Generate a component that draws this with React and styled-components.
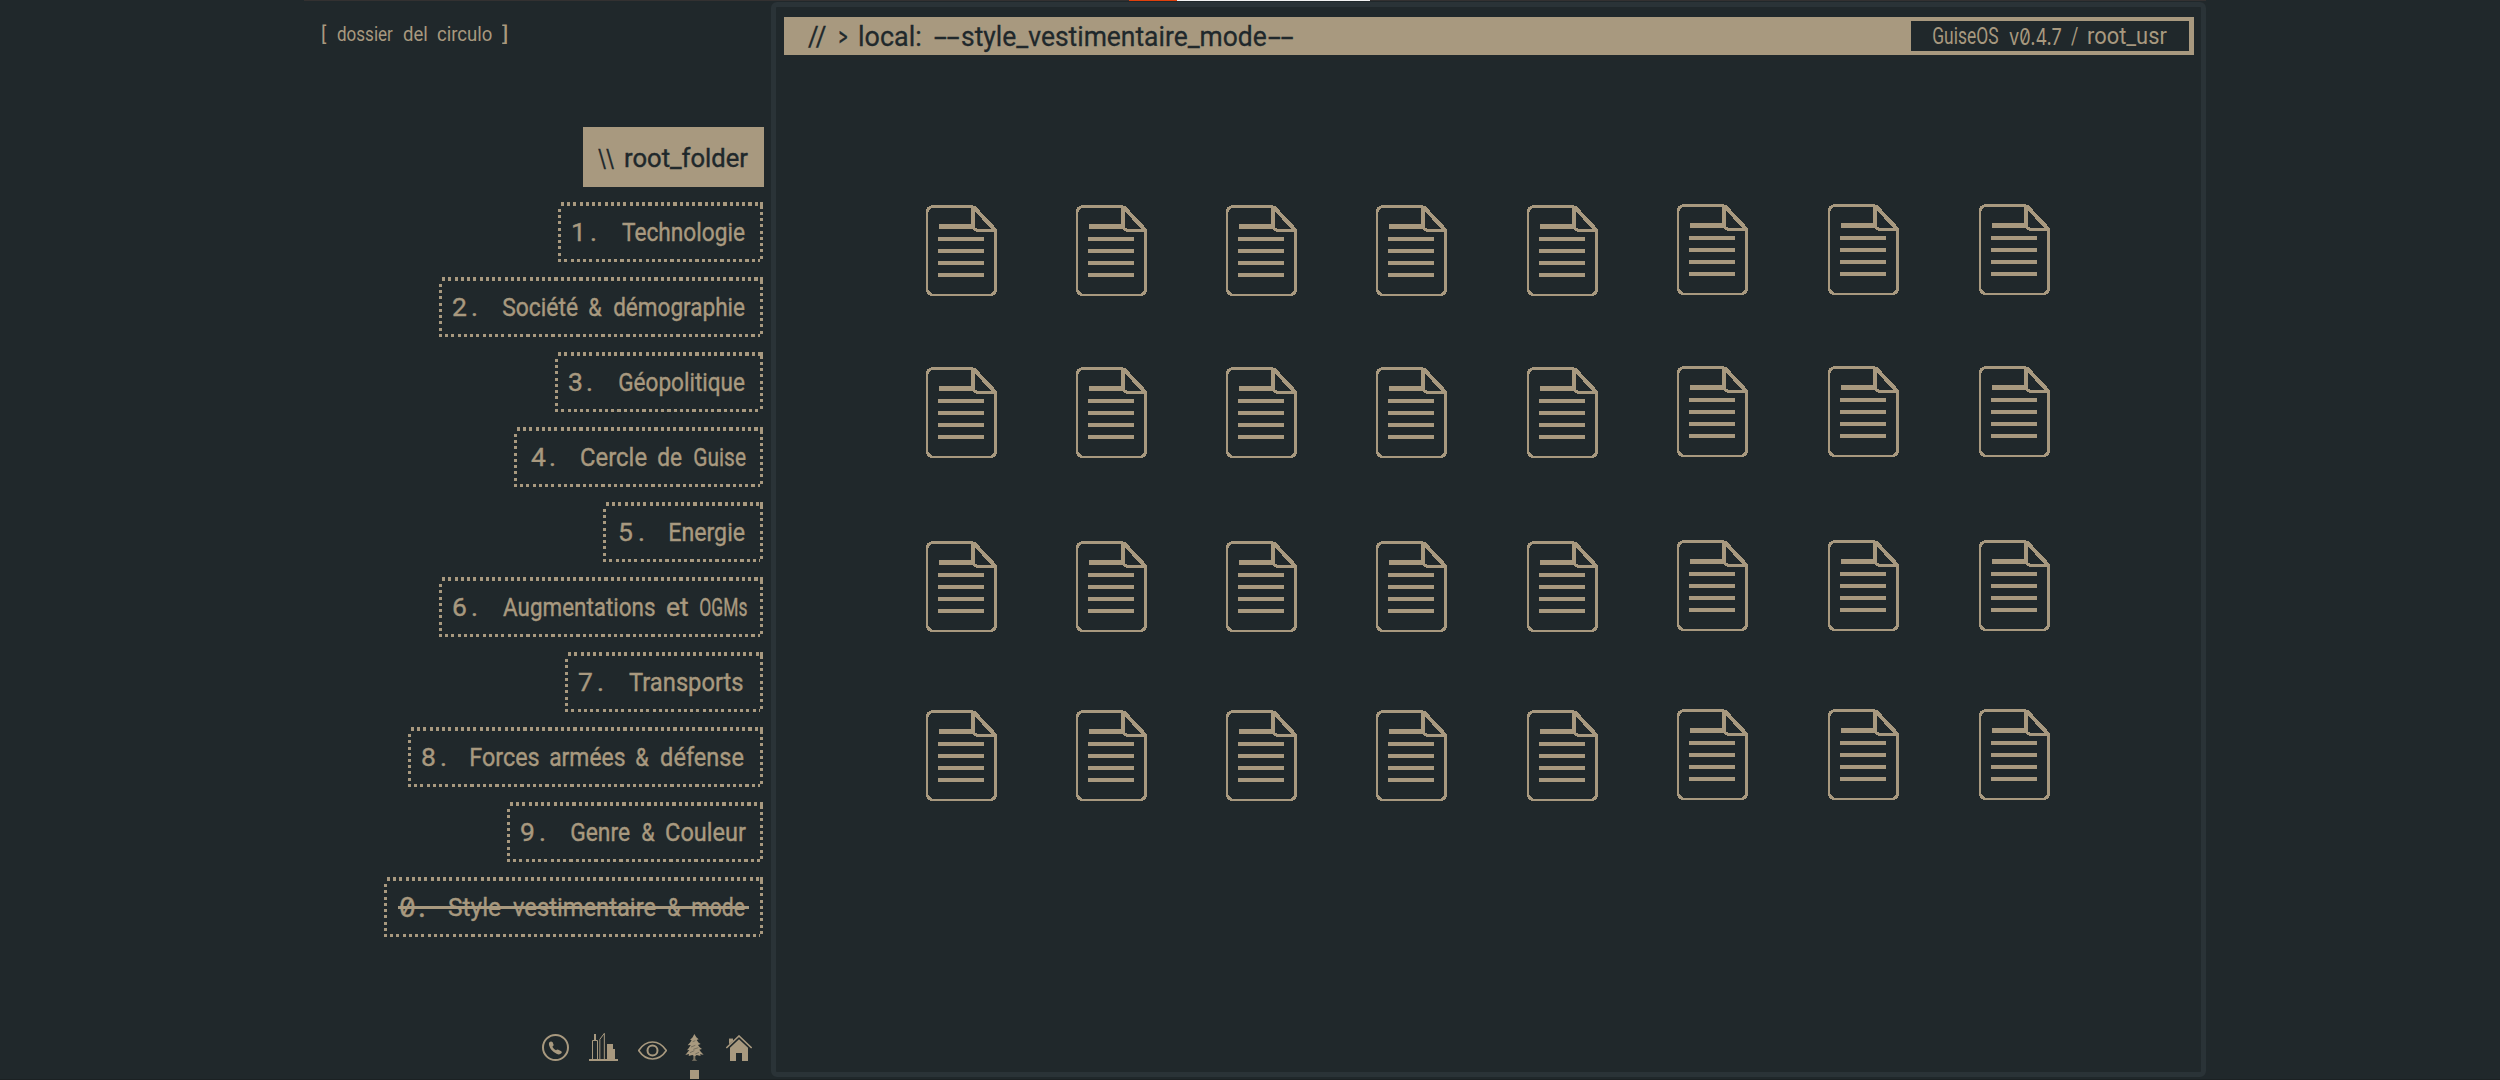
import React from "react";
import styled, { createGlobalStyle, css } from "styled-components";

const BG = "#20282b";
const TAN = "#a8997f";
const LINE = "#2a3337";

const GlobalStyle = createGlobalStyle`
  * { box-sizing: border-box; }
  body { margin: 0; background: ${BG}; overflow: hidden; }
`;

const Page = styled.div`
  width: 2500px;
  height: 1080px;
  display: flex;
  flex-direction: column;
  background: ${BG};
  color: ${TAN};
  font-family: Roboto, "Liberation Sans", sans-serif;
`;

const LoadStrip = styled.div`
  height: 1px;
  margin: 0 294px 1px 304px;
  display: flex;
  background: #333131;
`;

const StripPart = styled.div`
  width: ${(p) => p.$width}px;
  margin-left: ${(p) => p.$gap || 0}px;
  background: ${(p) => p.$color};
`;

const Columns = styled.div`
  flex: 1;
  display: flex;
  padding-left: 304px;
`;

const BottomEdge = styled.div`
  height: 1px;
  background: #1b2123;
`;

const Sidebar = styled.aside`
  width: 467px;
  display: flex;
  flex-direction: column;
`;

const Line = styled.div`
  display: flex;
  height: ${(p) => p.$height}px;
  line-height: ${(p) => p.$height}px;
  margin-top: ${(p) => p.$shift || 0}px;
`;

const WordBox = styled.span`
  display: block;
  flex: none;
  width: ${(p) => p.$width}px;
  margin-left: ${(p) => p.$gap}px;
  white-space: pre;
`;

const Glyphs = styled.span`
  display: inline-block;
  transform-origin: 0 0;
  font-size: ${(p) => p.$size}px;
  vertical-align: top;
  ${(p) =>
    p.$slashed &&
    css`
      font-family: Inter, sans-serif;
      font-feature-settings: "zero" 1;
    `}
`;

const ctx = document.createElement("canvas").getContext("2d");

/* Fits a word's ink to the given width: list numbers by tracking, other words by squeezing. */
function Word({ text, gap, width, size }) {
  const slashed = text.includes("0");
  const numbered = /^\d\.$/.test(text);
  ctx.font = `${size}px ${slashed ? "Inter" : "Roboto"}, sans-serif`;
  const m = ctx.measureText(text);
  const ink = m.actualBoundingBoxLeft + m.actualBoundingBoxRight;
  const scale = numbered ? 1 : width / ink;
  const shift = m.actualBoundingBoxLeft * scale;
  return (
    <WordBox $gap={gap} $width={width}>
      <Glyphs
        $size={size}
        $slashed={slashed}
        style={{
          transform: `translateX(${shift}px) scaleX(${scale})`,
          letterSpacing: numbered ? `${width - ink}px` : undefined,
        }}
      >
        {text}
      </Glyphs>
    </WordBox>
  );
}

/* words: [text, left, right], measured from the same origin as `from`. */
function Words({ words, from, size, height, shift }) {
  return (
    <Line $height={height} $shift={shift}>
      {words.map(([text, left, right], i) => (
        <Word
          key={i}
          text={text}
          size={size}
          width={right - left}
          gap={left - (i ? words[i - 1][2] : from)}
        />
      ))}
    </Line>
  );
}

const Dossier = styled.header`
  height: 125px;
`;

const Menu = styled.nav`
  display: flex;
  flex-direction: column;
  align-items: flex-end;
  gap: 15px;
  padding-right: 8px;
`;

const RootItem = styled.a`
  width: 181px;
  height: 60px;
  margin-right: -1px;
  background: ${TAN};
  color: ${BG};
  -webkit-text-stroke: 0.4px ${BG};
`;

const dots = (dir) =>
  `repeating-linear-gradient(${dir}, ${TAN} 0 3px, transparent 3px 6.25px)`;

const Item = styled.a`
  width: ${(p) => p.$width}px;
  height: 60px;
  display: grid;
  align-items: center;
  -webkit-text-stroke: 0.4px ${TAN};
  background:
    ${dots("90deg")} 3px 0 / calc(100% - 3px) 4px no-repeat,
    ${dots("90deg")} 0 100% / calc(100% - 3px) 3px no-repeat,
    ${dots("180deg")} 0 7px / 3px calc(100% - 7px) no-repeat,
    linear-gradient(${TAN}, ${TAN}) 100% 0 / 3px 7px no-repeat,
    ${dots("180deg")} 100% 10px / 3px calc(100% - 12px) no-repeat;
  > * { grid-area: 1 / 1; }
`;

const Strike = styled.span`
  height: 3px;
  margin: 1px 14px 0;
  background: ${TAN};
`;

const ITEMS = [
  { left: 558, words: [["1.", 573, 595], ["Technologie", 622, 745]] },
  { left: 439, words: [["2.", 453, 476], ["Société", 503, 578], ["&", 589, 602], ["démographie", 614, 745]] },
  { left: 555, words: [["3.", 569, 591], ["Géopolitique", 619, 745]] },
  { left: 514, words: [["4.", 531, 554], ["Cercle", 581, 647], ["de", 658, 682], ["Guise", 694, 746]] },
  { left: 603, words: [["5.", 620, 643], ["Energie", 670, 745]] },
  { left: 439, words: [["6.", 453, 476], ["Augmentations", 503, 655], ["et", 667, 688], ["OGMs", 700, 747]] },
  { left: 565, words: [["7.", 579, 602], ["Transports", 629, 743]] },
  { left: 408, words: [["8.", 422, 445], ["Forces", 471, 539], ["armées", 550, 625], ["&", 636, 649], ["défense", 661, 744]] },
  { left: 507, words: [["9.", 521, 544], ["Genre", 571, 630], ["&", 642, 655], ["Couleur", 666, 746]] },
  { left: 384, struck: true, words: [["0.", 400, 424], ["Style", 449, 501], ["vestimentaire", 513, 656], ["&", 668, 681], ["mode", 692, 745]] },
];

const Dock = styled.div`
  margin-top: 95px;
  padding-left: 238px;
  display: flex;
  align-items: flex-end;
  height: 29px;
`;

const DockIcon = styled.svg`
  display: block;
  flex: none;
  width: ${(p) => p.$w}px;
  height: ${(p) => p.$h}px;
  margin-left: ${(p) => p.$gap || 0}px;
  margin-bottom: ${(p) => p.$lift || 0}px;
  fill: ${TAN};
`;

const ActiveMark = styled.div`
  width: 9px;
  height: 9px;
  margin: 9px 0 0 386px;
  background: ${TAN};
`;

function DockIcons() {
  return (
    <Dock>
      <DockIcon $w={27} $h={27} viewBox="66 72 81 81">
        <circle cx="106.5" cy="112.500" r="37.500" fill="none" stroke={TAN} strokeWidth="6" />
        <path d="M88 97 Q93 92 98 97 L101 105 Q100 109 97 110 Q101 117 108 121 Q111 117 115 119 L124 124 Q127 127 124 130 Q119 135 111 132 Q92 124 87 105 Q86 100 88 97Z" />
      </DockIcon>
      <DockIcon $w={29} $h={29} $gap={20} viewBox="207 66 87 87">
        <path d="M207 147H294V153H207Z M222 72H228V91H222Z M261 102H279V117H285V148H261Z" />
        <path d="M217.500 148V91.500H232.500V148 M239.500 148V88L253 70V148" fill="none" stroke={TAN} strokeWidth="3" />
      </DockIcon>
      <DockIcon $w={29} $h={19} $gap={20} $lift={1} viewBox="354 92 87 57">
        <path d="M356 120.500 Q373 95 397.500 95 Q422 95 439 120.500 Q422 146 397.500 146 Q373 146 356 120.500Z" fill="none" stroke={TAN} strokeWidth="5" />
        <circle cx="397.500" cy="120.500" r="15" fill="none" stroke={TAN} strokeWidth="6" />
      </DockIcon>
      <DockIcon $w={19} $h={27} $gap={18} viewBox="495 72 57 81">
        <path d="M523 72L529 82 536 88 530 90 536 98 542 102 534 105 539 112 546 117 538 119 543 126 551 134 540 133 542 138 530 135 525 139 517 135 506 138 507 132 496 135 504 125 508 120 501 121 507 113 512 105 503 106 511 97 515 90 510 90 518 82Z" />
        <path d="M520 135H526V148L532 152H515L520 148Z" opacity="0.7" />
        <path d="M518 95L526 92M513 111L526 106M520 118L535 113M510 128L523 122M526 132L537 127" stroke={BG} strokeWidth="2" opacity="0.55" />
      </DockIcon>
      <DockIcon $w={26} $h={26} $gap={22} viewBox="618 75 78 78">
        <path d="M657 88L684 113V153H666V129H648V153H630V113Z" />
        <path d="M627 86H639V94L627 105Z" />
        <path d="M619 114L657 78L695 114" fill="none" stroke={BG} strokeWidth="10" />
        <path d="M619 114L657 78L695 114" fill="none" stroke={TAN} strokeWidth="5" />
        <path d="M627 86H639V92L627 103Z" />
      </DockIcon>
    </Dock>
  );
}

const Panel = styled.main`
  width: 1435px;
  height: 1075px;
  border: 5px solid ${LINE};
  border-radius: 6px;
  padding: 10px 7px 0 8px;
`;

const TitleBar = styled.div`
  height: 38px;
  display: flex;
  justify-content: space-between;
  padding: 4px 5px 4px 0;
  background: ${TAN};
  color: ${BG};
`;

const Title = styled.div`
  margin-top: -3px;
  -webkit-text-stroke: 0.3px ${BG};
`;

const Version = styled.div`
  width: 278px;
  height: 30px;
  padding-top: 1px;
  background: ${BG};
  color: ${TAN};
`;

const Files = styled.div`
  display: grid;
  grid-template-columns: 150px 150px 150px 151px 150px 151px 151px 71px;
  grid-template-rows: 162px 174px 169px 91px;
  padding: 150px 0 0 142px;
`;

const FileIcon = styled.svg`
  display: block;
  width: 71px;
  height: 91px;
  margin-top: ${(p) => (p.$raised ? -1 : 0)}px;
  fill: none;
  stroke: ${TAN};
`;

function File({ raised }) {
  return (
    <FileIcon $raised={raised} viewBox="0 0 71 91" shapeRendering="crispEdges">
      <path d="M1 5V86" strokeWidth="2" />
      <path d="M5 90H67" strokeWidth="2" />
      <path d="M5 1.500H47" strokeWidth="3" />
      <path d="M69.500 25V86" strokeWidth="3" />
      <path d="M1.500 7Q1.500 2 7 1.500 M1.500 85Q2 89 6 89.500 M69.500 85Q69 89 65 89.500" strokeWidth="3" />
      <path d="M47 1V22" strokeWidth="4" />
      <path d="M47.500 2L69.500 25.500" strokeWidth="4" />
      <path d="M47 21Q48 25.500 53 25.500H70" strokeWidth="3" />
      <path d="M13 21.500H48" strokeWidth="5" />
      <path d="M12 34H58M12 46H58M12 58H58M12 70H58" strokeWidth="4" />
    </FileIcon>
  );
}

export default function App() {
  return (
    <Page>
      <GlobalStyle />
      <LoadStrip>
        <StripPart $gap={825} $width={48} $color="#e0400c" />
        <StripPart $width={193} $color="#f2f2f2" />
      </LoadStrip>
      <Columns>
        <Sidebar>
          <Dossier>
            <Words
              from={304}
              size={20}
              height={68}
              shift={-2}
              words={[["[", 322, 327], ["dossier", 337, 393], ["del", 403, 427], ["circulo", 437, 492], ["]", 502, 507]]}
            />
          </Dossier>
          <Menu>
            <RootItem>
              <Words from={583} size={26.500} height={62} words={[["\\\\", 598, 614], ["root_folder", 625, 748]]} />
            </RootItem>
            {ITEMS.map((item) => (
              <Item key={item.left + item.words[0][0]} $width={763 - item.left}>
                <Words from={item.left} size={26.500} height={60} words={item.words} />
                {item.struck && <Strike />}
              </Item>
            ))}
          </Menu>
          <DockIcons />
          <ActiveMark />
        </Sidebar>
        <Panel>
          <TitleBar>
            <Title>
              <Words
                from={784}
                size={28}
                height={38}
                words={[
                  ["//", 808, 826],
                  [">", 839, 847],
                  ["local:", 860, 920],
                  ["--", 934, 960],
                  ["style_vestimentaire_mode", 962, 1266],
                  ["--", 1268, 1294],
                ]}
              />
            </Title>
            <Version>
              <Words
                from={1911}
                size={23}
                height={30}
                words={[["GuiseOS", 1933, 1998], ["v0.4.7", 2009, 2061], ["/", 2071, 2078], ["root_usr", 2088, 2167]]}
              />
            </Version>
          </TitleBar>
          <Files>
            {Array.from({ length: 32 }, (_, i) => (
              <File key={i} raised={i % 8 > 4} />
            ))}
          </Files>
        </Panel>
      </Columns>
      <BottomEdge />
    </Page>
  );
}
